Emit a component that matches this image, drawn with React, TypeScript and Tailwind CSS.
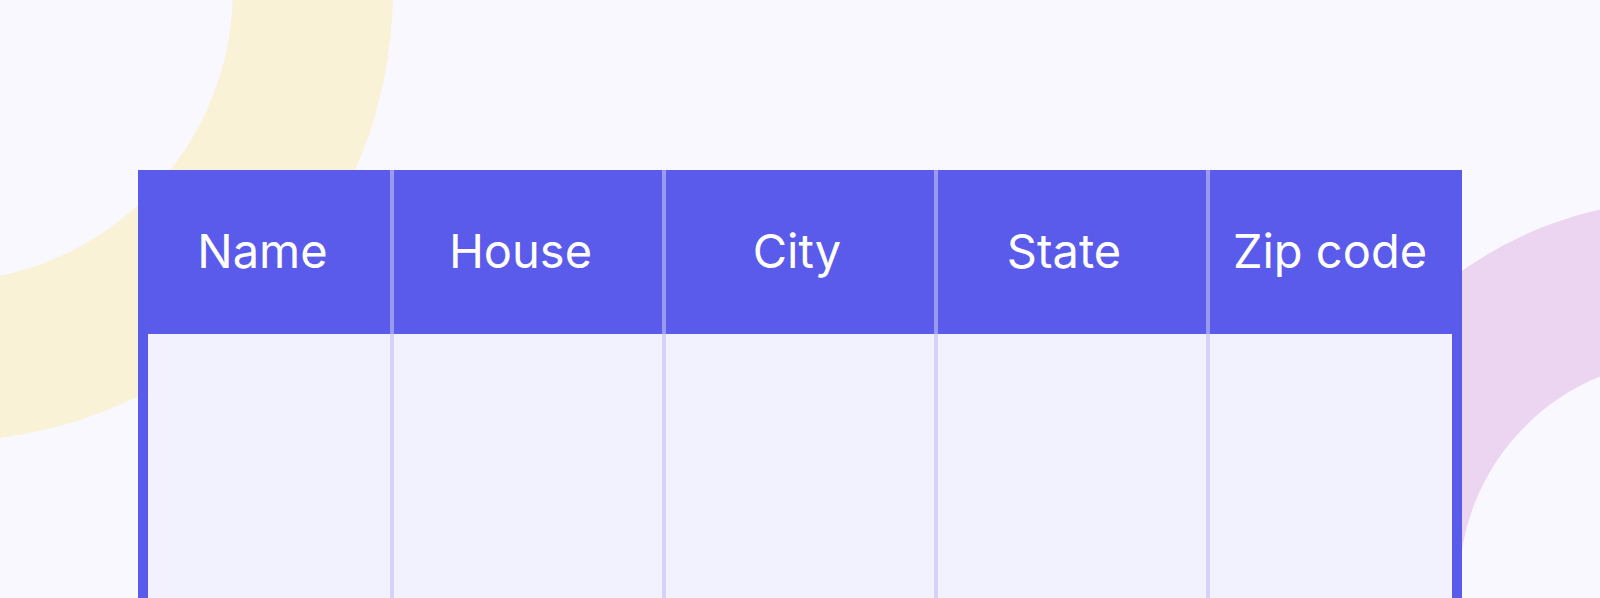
import React from "react";

const columns = [
  { label: "Name", pad: "pr-[3px]" },
  { label: "House", pad: "pr-[15px]" },
  { label: "City", pad: "pr-[6px]" },
  { label: "State", pad: "pr-[16px]" },
  { label: "Zip code", pad: "pr-[12px]" },
];

export default function App() {
  return (
    <div
      className="relative h-[598px] w-full overflow-hidden bg-[#f9f8fe]"
      style={{ fontFamily: "Inter, 'Noto Sans', sans-serif" }}
    >
      {/* decorative rings */}
      <div className="pointer-events-none absolute left-[-513px] top-[-464px] h-[906px] w-[906px] rounded-full border-[160px] border-[#f9f2d6]" />
      <div className="pointer-events-none absolute left-[1299px] top-[200px] h-[772px] w-[772px] rounded-full border-[160px] border-[#ebd5f1]" />

      <div className="relative pl-[138px] pt-[170px]">
        <div className="w-[1324px]">
          {/* header */}
          <div className="grid h-[164px] grid-cols-[252px_4px_268px_4px_268px_4px_268px_4px_252px] bg-[#5b5beb]">
            {columns.map((col, i) => (
              <React.Fragment key={col.label}>
                {i > 0 && <div className="bg-[#9b9af3]" />}
                <div
                  className={`flex items-center justify-center pb-[3px] text-[47px] font-normal leading-none text-white ${col.pad}`}
                >
                  {col.label}
                </div>
              </React.Fragment>
            ))}
          </div>

          {/* body */}
          <div className="bg-[#5b5beb] px-[10px]">
            <div className="grid h-[300px] grid-cols-[242px_4px_268px_4px_268px_4px_268px_4px_242px] bg-[#f2f1fe]">
              {columns.map((col, i) => (
                <React.Fragment key={col.label}>
                  {i > 0 && <div className="bg-[#d4d2fa]" />}
                  <div />
                </React.Fragment>
              ))}
            </div>
          </div>
        </div>
      </div>
    </div>
  );
}
